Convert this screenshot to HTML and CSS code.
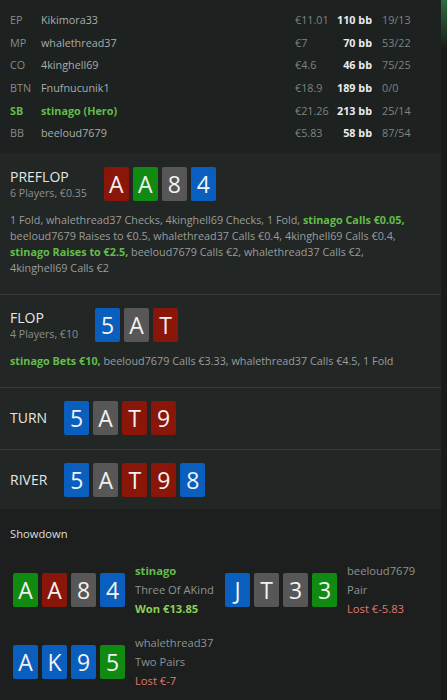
FILE: index.html
```html
<!DOCTYPE html>
<html>
<head>
<meta charset="utf-8">
<link rel="stylesheet" href="styles.css">
</head>
<body>
<div class="page">
  <div class="main">
    <section class="players">
      <div class="prow"><span class="pos">EP</span><span class="name">Kikimora33</span><span class="amt">€11.01</span><span class="bb">110 bb</span><span class="stat">19/13</span></div>
      <div class="prow"><span class="pos">MP</span><span class="name">whalethread37</span><span class="amt">€7</span><span class="bb">70 bb</span><span class="stat">53/22</span></div>
      <div class="prow"><span class="pos">CO</span><span class="name">4kinghell69</span><span class="amt">€4.6</span><span class="bb">46 bb</span><span class="stat">75/25</span></div>
      <div class="prow"><span class="pos">BTN</span><span class="name">Fnufnucunik1</span><span class="amt">€18.9</span><span class="bb">189 bb</span><span class="stat">0/0</span></div>
      <div class="prow hero"><span class="pos">SB</span><span class="name">stinago (Hero)</span><span class="amt">€21.26</span><span class="bb">213 bb</span><span class="stat">25/14</span></div>
      <div class="prow"><span class="pos">BB</span><span class="name">beeloud7679</span><span class="amt">€5.83</span><span class="bb">58 bb</span><span class="stat">87/54</span></div>
    </section>

    <div class="streets">
      <section class="street">
        <div class="street-head">
          <div class="street-title">
            <div class="title">PREFLOP</div>
            <div class="sub">6 Players, €0.35</div>
          </div>
          <div class="cards">
            <span class="card red">A</span><span class="card green">A</span><span class="card gray">8</span><span class="card blue">4</span>
          </div>
        </div>
        <p class="actions">1 Fold, whalethread37 Checks, 4kinghell69 Checks, 1 Fold, <b class="hl">stinago Calls €0.05,</b> beeloud7679 Raises to €0.5, whalethread37 Calls €0.4, 4kinghell69 Calls €0.4, <b class="hl">stinago Raises to €2.5,</b> beeloud7679 Calls €2, whalethread37 Calls €2, 4kinghell69 Calls €2</p>
      </section>

      <section class="street">
        <div class="street-head">
          <div class="street-title">
            <div class="title">FLOP</div>
            <div class="sub">4 Players, €10</div>
          </div>
          <div class="cards">
            <span class="card blue">5</span><span class="card gray">A</span><span class="card red">T</span>
          </div>
        </div>
        <p class="actions"><b class="hl">stinago Bets €10,</b> beeloud7679 Calls €3.33, whalethread37 Calls €4.5, 1 Fold</p>
      </section>

      <section class="street compact">
        <div class="street-head">
          <div class="street-title">
            <div class="title">TURN</div>
          </div>
          <div class="cards">
            <span class="card blue">5</span><span class="card gray">A</span><span class="card red">T</span><span class="card red">9</span>
          </div>
        </div>
      </section>

      <section class="street compact last">
        <div class="street-head">
          <div class="street-title">
            <div class="title">RIVER</div>
          </div>
          <div class="cards">
            <span class="card blue">5</span><span class="card gray">A</span><span class="card red">T</span><span class="card red">9</span><span class="card blue">8</span>
          </div>
        </div>
      </section>
    </div>

    <section class="showdown">
      <div class="sd-title">Showdown</div>
      <div class="hands">
        <div class="hand">
          <div class="cards">
            <span class="card green">A</span><span class="card red">A</span><span class="card gray">8</span><span class="card blue">4</span>
          </div>
          <div class="info">
            <div class="hname hl">stinago</div>
            <div class="hrank">Three Of AKind</div>
            <div class="won">Won €13.85</div>
          </div>
        </div>
        <div class="hand">
          <div class="cards">
            <span class="card blue">J</span><span class="card gray">T</span><span class="card gray">3</span><span class="card green">3</span>
          </div>
          <div class="info">
            <div class="hname">beeloud7679</div>
            <div class="hrank">Pair</div>
            <div class="lost">Lost €-5.83</div>
          </div>
        </div>
        <div class="hand">
          <div class="cards">
            <span class="card blue">A</span><span class="card blue">K</span><span class="card blue">9</span><span class="card green">5</span>
          </div>
          <div class="info">
            <div class="hname">whalethread37</div>
            <div class="hrank">Two Pairs</div>
            <div class="lost">Lost €-7</div>
          </div>
        </div>
      </div>
    </section>
  </div>
  <div class="rail"><div class="rail-glow"></div></div>
</div>
</body>
</html>
```

FILE: styles.css
```css
* { box-sizing: border-box; }
html, body { margin: 0; padding: 0; }
body {
  background: #1c1f1e;
  font-family: "Open Sans", "Noto Sans", sans-serif;
  color: #a3a7a5;
  width: 447px;
  height: 700px;
  overflow: hidden;
}
.page {
  display: flex;
  height: 700px;
}
.main {
  width: 441px;
  display: flex;
  flex-direction: column;
}
.rail {
  width: 6px;
  background: #191b1a;
}
.rail-glow {
  height: 50px;
  background: linear-gradient(to bottom, #2f6b3b, rgba(47,107,59,0));
}

.players {
  background: #1d2120;
  padding: 8px 0 9px 10px;
  font-size: 10.8px;
}
.prow {
  display: grid;
  grid-template-columns: 31px 254px 36px 41px 60px;
  height: 22.7px;
  align-items: center;
  white-space: nowrap;
}
.pos { color: #878b89; }
.name { color: #a9adab; }
.amt { color: #7f8381; }
.bb { color: #ebebeb; font-weight: 700; text-align: right; }
.stat { color: #7f8381; padding-left: 10px; }
.prow.hero .pos,
.prow.hero .name { color: #63bd4a; font-weight: 700; }

.streets {
  background: #222625;
}
.street {
  border-top: 1px solid #343837;
  padding: 13px 30px 18px 10px;
}
.street:first-child { border-top: none; padding-top: 14px; }
.street.compact { padding-bottom: 14px; }
.street.last { padding-bottom: 12px; }
.street-head {
  display: flex;
  align-items: center;
  gap: 17px;
}
.title {
  color: #e6e8e7;
  font-size: 14px;
  line-height: 18px;
}
.sub {
  color: #8c908e;
  font-size: 10.6px;
  line-height: 15px;
}
.actions {
  margin: 11px 0 0;
  font-size: 10.8px;
  line-height: 16px;
  color: #999d9b;
}
.hl { color: #63bd4a; font-weight: 700; }

.cards {
  display: flex;
  gap: 4px;
}
.card {
  width: 25px;
  height: 34px;
  border-radius: 2px;
  color: #f2f2f2;
  font-size: 23px;
  line-height: 34px;
  text-align: center;
}
.red { background: #8a1609; }
.green { background: #118a12; }
.gray { background: #565756; }
.blue { background: #0a5fbe; }

.showdown {
  flex: 1;
  background: #1c1f1e;
  padding: 17px 0 0 10px;
}
.sd-title {
  color: #dcdedd;
  font-size: 11.2px;
  line-height: 16px;
}
.hands {
  display: grid;
  grid-template-columns: 212px 212px;
  row-gap: 15px;
  margin-top: 19px;
  padding-left: 3px;
}
.hand {
  display: flex;
  align-items: center;
  gap: 10px;
}
.info {
  font-size: 11.2px;
  line-height: 19px;
  color: #8f9391;
  white-space: nowrap;
}
.won { color: #8ccf55; font-weight: 700; }
.lost { color: #e0786a; }
```
